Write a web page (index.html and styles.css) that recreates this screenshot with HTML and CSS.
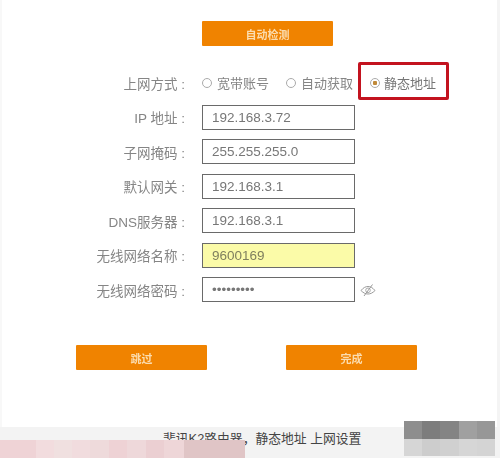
FILE: index.html
```html
<!DOCTYPE html>
<html lang="zh-CN">
<head>
<meta charset="utf-8">
<title>静态地址上网设置</title>
<link rel="stylesheet" href="styles.css">
</head>
<body>
<main class="page">
  <div class="panel">
    <div class="top-action"><button class="btn" type="button">自动检测</button></div>
    <form class="form">
      <div class="row">
        <span class="label">上网方式 :</span>
        <div class="radios">
          <span class="radio"><i class="dot"></i>宽带账号</span>
          <span class="radio"><i class="dot"></i>自动获取</span>
          <span class="radio marked"><i class="dot on"></i>静态地址</span>
        </div>
      </div>
      <div class="row"><span class="label">IP 地址 :</span><input class="field" value="192.168.3.72" readonly></div>
      <div class="row"><span class="label">子网掩码 :</span><input class="field" value="255.255.255.0" readonly></div>
      <div class="row"><span class="label">默认网关 :</span><input class="field" value="192.168.3.1" readonly></div>
      <div class="row"><span class="label">DNS服务器 :</span><input class="field" value="192.168.3.1" readonly></div>
      <div class="row"><span class="label">无线网络名称 :</span><input class="field yellow" value="9600169" readonly></div>
      <div class="row"><span class="label">无线网络密码 :</span><input class="field" type="password" value="123456789" readonly>
        <svg class="eye" viewBox="0 0 16 14" width="16" height="14" aria-hidden="true">
          <path d="M1 7.500C3.500 4.500 5.700 3.500 8 3.500s4.500 1 7 4c-2.500 2.600-4.700 3.500-7 3.500S3.500 10.100 1 7.500z" fill="none" stroke="#999" stroke-width="1"/>
          <circle cx="8" cy="7.300" r="2.300" fill="none" stroke="#aaa" stroke-width="1"/>
          <path d="M12.500 1.500L4 13" stroke="#999" stroke-width="1"/>
        </svg>
      </div>
    </form>
    <div class="actions">
      <button class="btn" type="button">跳过</button>
      <button class="btn" type="button">完成</button>
    </div>
  </div>
  <footer class="caption">
    <p class="caption-text">斐讯K2路由器，静态地址 上网设置</p>
    <div class="mosaic pink">
      <i class="p1"></i><i class="p2"></i><i class="p3"></i><i class="p4"></i><i class="p5"></i><i class="p6"></i><i class="p7"></i><i class="p8"></i><i class="p9"></i><i class="p10"></i>
    </div>
    <div class="mosaic gray">
      <i class="g1"></i><i class="g2"></i><i class="g3"></i><i class="g4"></i><i class="g5"></i>
      <i class="h1"></i><i class="h2"></i><i class="h3"></i><i class="h4"></i><i class="h5"></i>
    </div>
  </footer>
</main>
</body>
</html>
```

FILE: styles.css
```css
* { box-sizing: border-box; }
html, body { margin: 0; padding: 0; background: #fff; }
body {
  font-family: "Liberation Sans", "Noto Sans CJK SC", sans-serif;
  color: #777;
}
.page {
  position: relative;
  width: 500px;
  height: 458px;
  overflow: hidden;
  filter: blur(0.45px);
}
.panel {
  height: 427px;
  padding-top: 21px;
  border-left: 2px solid #f8f8f8;
  border-right: 3px solid #f4f4f4;
}
.btn {
  display: block;
  width: 131px;
  height: 25px;
  padding: 0;
  border: 0;
  border-radius: 1px;
  background: #f08300;
  color: #fbdcae;
  font: bold 11px "Liberation Sans", "Noto Sans CJK SC", sans-serif;
}
.top-action { padding-left: 200px; }
.form {
  display: flex;
  flex-direction: column;
  gap: 9.500px;
  margin-top: 24px;
}
.row {
  display: flex;
  align-items: center;
  height: 25px;
}
.label {
  width: 183px;
  margin-right: 17px;
  text-align: right;
  font-size: 13.500px;
  white-space: nowrap;
  color: #858585;
}
.field {
  width: 153px;
  height: 25px;
  padding: 0 9px;
  border: 1.500px solid #6a6a6a;
  border-radius: 0;
  outline: none;
  background: #fff;
  color: #777;
  font: 13.500px "Liberation Sans", "Noto Sans CJK SC", sans-serif;
}
.field.yellow { background: #fbfba8; color: #7f7f5e; }
.eye { margin-left: 5px; }
.radios { display: flex; align-items: center; }
.radio {
  display: flex;
  align-items: center;
  gap: 5px;
  width: 84px;
  font-size: 13px;
  white-space: nowrap;
  color: #858585;
}
.dot {
  display: block;
  width: 10px;
  height: 10px;
  border: 1px solid #aaa;
  border-radius: 50%;
  background: #fff;
}
.dot.on { background: radial-gradient(circle, #c08a3a 0 2px, #fff 2.500px); }
.radio.marked {
  gap: 4px;
  width: 91px;
  height: 38px;
  margin-left: -12px;
  margin-bottom: 4px;
  padding-top: 4px;
  padding-left: 9px;
  border: 3px solid #c3131f;
  border-radius: 2px;
  color: #757575;
}
.actions {
  display: flex;
  gap: 79px;
  margin-top: 43px;
  padding-left: 74px;
}
.caption {
  position: relative;
  height: 31px;
  background: #f3f3f3;
}
.caption-text {
  margin: 0;
  padding: 3px 0 0 163px;
  font-size: 12.800px;
  line-height: 18px;
  color: #444;
  white-space: nowrap;
}
.mosaic { position: absolute; display: grid; }
.pink {
  left: 0;
  top: 13px;
  width: 245px;
  height: 18px;
  grid-template-columns: 36px 18px 18px 18px 19px 18px 19px 18px 20px 61px;
}
.p1 { background: #efd3d6; }
.p2 { background: #f2dcde; }
.p3 { background: #f0e0e0; }
.p4 { background: #f1dcde; }
.p5 { background: #eedadb; }
.p6 { background: #eed2d5; }
.p7 { background: #eed8da; }
.p8 { background: #ebcfd2; }
.p9 { background: #eed6d8; }
.p10 { background: #e0c5c6; }
.gray {
  left: 404px;
  top: -6px;
  width: 91px;
  height: 35px;
  grid-template-columns: 18px 18px 19px 18px 18px;
  grid-template-rows: 18px 17px;
}
.g1 { background: #8e8e8e; }
.g2 { background: #7d7d7d; }
.g3 { background: #848484; }
.g4 { background: #a0a0a0; }
.g5 { background: #979797; }
.h1 { background: #d6d6d6; }
.h2 { background: #cdcdcd; }
.h3 { background: #d0d0d0; }
.h4 { background: #d6d6d6; }
.h5 { background: #d4d4d4; }
```
